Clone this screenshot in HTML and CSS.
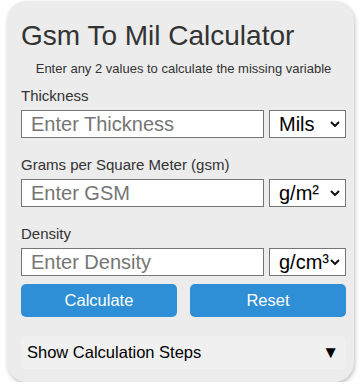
FILE: index.html
```html
<!DOCTYPE html>
<html lang="en">
<head>
  <meta charset="UTF-8">
  <meta name="viewport" content="width=device-width, initial-scale=1.0">
  <title>Gsm To Mil Calculator</title>
  <link rel="stylesheet" href="styles.css">
</head>
<body>
  <div class="calculator">
    <h1>Gsm To Mil Calculator</h1>
    <p class="hint">Enter any 2 values to calculate the missing variable</p>

    <div class="field">
      <label for="thickness">Thickness</label>
      <div class="row">
        <input type="number" id="thickness" placeholder="Enter Thickness">
        <div class="unit">
          <select id="thicknessUnit">
            <option>Mils</option>
          </select>
          <svg class="chevron" width="10" height="6" viewBox="0 0 10 6"><path d="M1 1l4 4 4-4"/></svg>
        </div>
      </div>
    </div>

    <div class="field">
      <label for="gsm">Grams per Square Meter (gsm)</label>
      <div class="row">
        <input type="number" id="gsm" placeholder="Enter GSM">
        <div class="unit">
          <select id="gsmUnit">
            <option>g/m²</option>
          </select>
          <svg class="chevron" width="10" height="6" viewBox="0 0 10 6"><path d="M1 1l4 4 4-4"/></svg>
        </div>
      </div>
    </div>

    <div class="field">
      <label for="density">Density</label>
      <div class="row">
        <input type="number" id="density" placeholder="Enter Density">
        <div class="unit">
          <select id="densityUnit">
            <option>g/cm³</option>
          </select>
          <svg class="chevron" width="10" height="6" viewBox="0 0 10 6"><path d="M1 1l4 4 4-4"/></svg>
        </div>
      </div>
    </div>

    <div class="buttons">
      <button id="calculate">Calculate</button>
      <button id="reset">Reset</button>
    </div>

    <div class="steps">
      <span>Show Calculation Steps</span>
      <span class="arrow">▼</span>
    </div>
  </div>
</body>
</html>
```

FILE: styles.css
```css
* {
  box-sizing: border-box;
  font-family: "Liberation Sans", Arial, sans-serif;
}
body {
  margin: 0;
  background-color: #fff;
}
.calculator {
  width: 347px;
  margin: 1px 0 0 7px;
  padding: 19px 8px 13px 14px;
  background-color: #ebeceb;
  border-radius: 20px;
  box-shadow: 1px 2px 4px rgba(0, 0, 0, 0.25);
}
.calculator h1 {
  margin: 0 0 9px;
  font-size: 28px;
  line-height: 32px;
  font-weight: normal;
  color: #333;
}
.hint {
  margin: 0 0 11px;
  font-size: 13px;
  line-height: 15px;
  text-align: center;
  color: #333;
}
.field label {
  display: block;
  margin-bottom: 6px;
  font-size: 15px;
  line-height: 17px;
  color: #333;
}
.field + .field {
  margin-top: 18px;
}
.row {
  display: flex;
  gap: 5px;
}
.row input {
  flex: 1;
  min-width: 0;
  height: 28px;
  padding: 0 9px;
  border: 1px solid #767676;
  border-radius: 0;
  background-color: #fff;
  font-size: 20px;
  color: #000;
}
.row input::placeholder {
  color: #757575;
}
.unit {
  position: relative;
  width: 77px;
}
.unit select {
  appearance: none;
  -webkit-appearance: none;
  width: 100%;
  height: 28px;
  padding: 0 0 0 9px;
  border: 1px solid #767676;
  border-radius: 0;
  background-color: #fff;
  font-size: 20px;
  color: #000;
}
.chevron {
  position: absolute;
  right: 6px;
  top: 11px;
  pointer-events: none;
}
.chevron path {
  fill: none;
  stroke: #111;
  stroke-width: 2;
}
.buttons {
  display: flex;
  gap: 13px;
  margin-top: 8px;
}
.buttons button {
  flex: 1;
  height: 33px;
  border: none;
  border-radius: 5px;
  background-color: #2e8fd6;
  color: #fff;
  font-size: 16.5px;
}
.steps {
  display: flex;
  justify-content: space-between;
  align-items: center;
  height: 33px;
  margin-top: 19px;
  padding: 0 7px 0 6px;
  border-radius: 5px;
  background-color: #f0f0f0;
  font-size: 16.5px;
  color: #000;
}
.steps .arrow {
  font-size: 17px;
}
```
